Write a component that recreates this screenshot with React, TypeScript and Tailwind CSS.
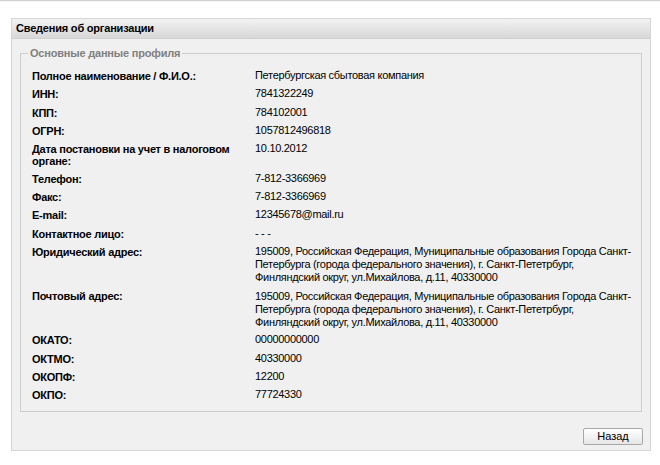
import React from "react";

const addr = [
  "195009, Российская Федерация, Муниципальные образования Города Санкт-",
  "Петербурга (города федерального значения), г. Санкт-Пететрбург,",
  "Финляндский округ, ул.Михайлова, д.11, 40330000",
];

const rows: { label: string; value: string | string[] }[] = [
  { label: "Полное наименование / Ф.И.О.:", value: "Петербургская сбытовая компания" },
  { label: "ИНН:", value: "7841322249" },
  { label: "КПП:", value: "784102001" },
  { label: "ОГРН:", value: "1057812496818" },
  { label: "Дата постановки на учет в налоговом органе:", value: "10.10.2012" },
  { label: "Телефон:", value: "7-812-3366969" },
  { label: "Факс:", value: "7-812-3366969" },
  { label: "E-mail:", value: "12345678@mail.ru" },
  { label: "Контактное лицо:", value: "- - -" },
  { label: "Юридический адрес:", value: addr },
  { label: "Почтовый адрес:", value: addr },
  { label: "ОКАТО:", value: "00000000000" },
  { label: "ОКТМО:", value: "40330000" },
  { label: "ОКОПФ:", value: "12200" },
  { label: "ОКПО:", value: "77724330" },
];

export default function App() {
  return (
    <div
      className="w-[660px] h-[465px] bg-white text-[11px] text-black overflow-hidden"
      style={{ fontFamily: '"Liberation Sans", Arial, sans-serif' }}
    >
      <div className="h-[2px] border-t border-[#d2d2d2] bg-[#f6f6f6]" />
      <div className="pt-[16px] pl-[11px] pr-[9px]">
        <div className="border border-[#d6d6d6] bg-[#f0f0f0]">
          <div className="h-[20px] flex items-center pl-[4px] font-bold tracking-[-0.2px] bg-gradient-to-b from-[#f2f2f2] to-[#d8d8d8] border-b border-[#d0d0d0]">
            Сведения об организации
          </div>
          <div className="px-[8px] pt-[8px] pb-[5px] flex flex-col">
            <fieldset className="border border-[#cdcdcd] m-0 p-0 min-w-0">
              <legend className="ml-[7px] px-[2px] font-bold text-[#808080] leading-[12px] tracking-[-0.2px]">
                Основные данные профиля
              </legend>
              <div className="grid grid-cols-[223px_1fr] gap-y-[4.75px] pl-[11px] pr-[8px] pt-[10px] pb-[9px]">
                {rows.map((r) => (
                  <React.Fragment key={r.label}>
                    <div className="font-bold leading-[12px] pr-[8px] pt-[1px] tracking-[-0.25px]">{r.label}</div>
                    {Array.isArray(r.value) ? (
                      <div className="leading-[13px] tracking-[-0.3px] pt-[0.5px]">
                        {r.value.map((l) => (
                          <div key={l}>{l}</div>
                        ))}
                      </div>
                    ) : (
                      <div className="leading-[13.5px] tracking-[-0.3px]">{r.value}</div>
                    )}
                  </React.Fragment>
                ))}
              </div>
            </fieldset>
            <div className="flex justify-end mt-[16px]">
              <button className="w-[60px] h-[17px] text-[11px] leading-[15px] border border-[#a8a8a8] rounded-[2px] bg-gradient-to-b from-white to-[#e6e6e6] mr-[-1px]">
                Назад
              </button>
            </div>
          </div>
        </div>
      </div>
    </div>
  );
}
